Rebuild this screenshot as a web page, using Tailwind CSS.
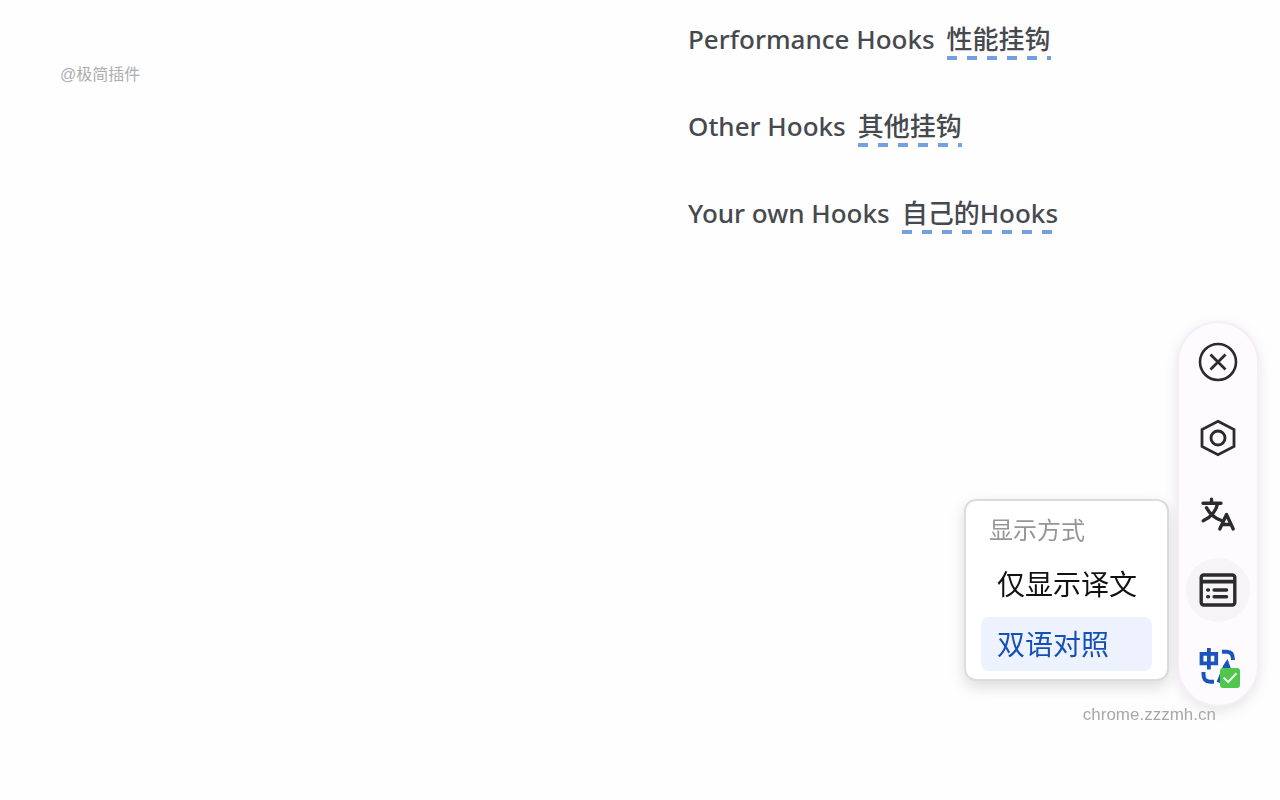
<!doctype html>
<html lang="zh-CN">
  <head>
    <meta charset="UTF-8" />
    <meta name="viewport" content="width=device-width, initial-scale=1.0" />
    <title>双语对照</title>
    <script src="https://cdn.jsdelivr.net/npm/@tailwindcss/browser@4"></script>
  </head>
  <body class="min-h-screen bg-[#fefefe] font-['Noto_Sans','Noto_Sans_CJK_SC',sans-serif]">

    <main class="grid grid-cols-[43fr_37fr]">
      <p class="pl-15 pt-[65px] text-base leading-5 text-[#adadad] font-['Liberation_Sans','Noto_Sans_CJK_SC',sans-serif]">@极简插件</p>

      <!-- Hooks list, each title followed by its translation -->
      <ul class="flex flex-col gap-[47px] pt-5 text-[26px] leading-[39px] font-medium text-[#46494e]">
        <li class="flex h-10 gap-3">
          <span>Performance Hooks</span>
          <span class="bg-[repeating-linear-gradient(90deg,#72a0e0_0_10px,transparent_10px_20px)] bg-[length:100%_4px] bg-bottom bg-no-repeat">性能挂钩</span>
        </li>
        <li class="flex h-10 gap-3">
          <span>Other Hooks</span>
          <span class="bg-[repeating-linear-gradient(90deg,#72a0e0_0_10px,transparent_10px_20px)] bg-[length:100%_4px] bg-bottom bg-no-repeat">其他挂钩</span>
        </li>
        <li class="flex h-10 gap-3">
          <span>Your own Hooks</span>
          <span class="bg-[repeating-linear-gradient(90deg,#72a0e0_0_10px,transparent_10px_20px)] bg-[length:100%_4px] bg-bottom bg-no-repeat">自己的Hooks</span>
        </li>
      </ul>
    </main>

    <!-- Floating translate widget -->
    <div class="fixed right-[21px] bottom-[93px] flex items-end gap-2">

      <section class="mb-[26px] flex w-[205px] flex-col rounded-xl border-2 border-[#dcdcde] bg-white px-[15px] pt-[10px] pb-2 whitespace-nowrap shadow-[0_6px_16px_rgba(0,0,0,0.14)] font-['Noto_Sans_CJK_SC',sans-serif]">
        <h2 class="px-2 text-2xl leading-9 font-normal text-[#969696]">显示方式</h2>
        <button type="button" class="mt-[10px] h-[54px] rounded-lg pr-2 pl-4 pb-[2px] text-left text-[28px] leading-[52px] text-[#111]">仅显示译文</button>
        <button type="button" class="mt-[6px] h-[54px] rounded-lg bg-[#edf2fe] pr-2 pl-4 pb-[2px] text-left text-[28px] leading-[52px] text-[#1450b8]">双语对照</button>
      </section>

      <nav class="flex w-[82px] flex-col items-center gap-3 rounded-full border-2 border-[#f5eef8] bg-[#fdfbfe] py-[7px] shadow-[0_4px_14px_rgba(0,0,0,0.1)]">
        <button type="button" aria-label="关闭" class="flex size-16 items-center justify-center rounded-full">
          <svg class="size-10" viewBox="0 0 40 40" fill="none" stroke="#2b2b2d" stroke-width="2.6">
            <circle cx="20" cy="20" r="18" />
            <path d="M12.5 12.5l15 15M27.5 12.5L12.5 27.5" stroke-width="2.8" />
          </svg>
        </button>
        <button type="button" aria-label="设置" class="flex size-16 items-center justify-center rounded-full">
          <svg class="size-10" viewBox="0 0 40 40" fill="none" stroke="#2b2b2d" stroke-width="2.8">
            <path d="M20 3.3L36 11.6V28.4L20 36.7L4 28.4V11.6Z" />
            <circle cx="20" cy="20" r="7" stroke-width="2.9" />
          </svg>
        </button>
        <button type="button" aria-label="翻译" class="flex size-16 items-center justify-center rounded-full">
          <svg class="size-10" viewBox="0 0 40 40" fill="none" stroke="#2b2b2d" stroke-width="3.4" stroke-linecap="round" stroke-linejoin="round">
            <path d="M5 9.3H23M13.5 5.2V9M19.5 9.8C18.5 16 13.5 23 5.2 26.8M8.5 13.8C11.5 19.5 17 24.5 23.5 26.5" />
            <path d="M21.8 35L28.5 20.5L35.2 35M24.5 30.5H32.8" />
          </svg>
        </button>
        <button type="button" aria-label="显示方式" class="flex size-16 items-center justify-center rounded-full bg-[#f7f4f7]">
          <svg class="size-10" viewBox="0 0 40 40" fill="none" stroke="#2b2b2d" stroke-width="3.4">
            <rect x="3.2" y="5" width="33.6" height="30" rx="2.5" />
            <path d="M3.5 11.6H36.5" stroke-width="3.6" />
            <path d="M9.8 20H10.4M16.2 20H28.5M9.8 26.8H10.4M16.2 26.8H28.5" stroke-width="3.6" stroke-linecap="round" />
          </svg>
        </button>
        <button type="button" aria-label="双语对照" class="flex size-16 items-center justify-center rounded-full">
          <svg class="size-[44px]" viewBox="0 0 44 44" fill="none">
            <g stroke="#1c54be" stroke-width="4">
              <path d="M5.5 9.8H20.2V19.4H5.5Z" stroke-width="3.8" />
              <path d="M12.9 4V25.5" stroke-width="3.8" />
              <path d="M26 7.8H31C35 7.8 37 10 37 16" />
              <path d="M7.5 28V30C7.5 35.5 9.5 37.7 14 37.7H18" />
              <path d="M22.5 38.5L29 22.5L31 19.5L34 28" />
            </g>
            <rect x="24" y="24" width="20" height="20" rx="3" fill="#50c64c" />
            <path d="M27.6 33.6L32.2 38L40.5 29.3" stroke="#e9ffe7" stroke-width="2" />
          </svg>
        </button>
      </nav>

      <a href="#" class="absolute right-[43px] -bottom-[18px] text-[17px] leading-5 text-[#a8a8a8] font-['Liberation_Sans',sans-serif]">chrome.zzzmh.cn</a>
    </div>

  </body>
</html>
